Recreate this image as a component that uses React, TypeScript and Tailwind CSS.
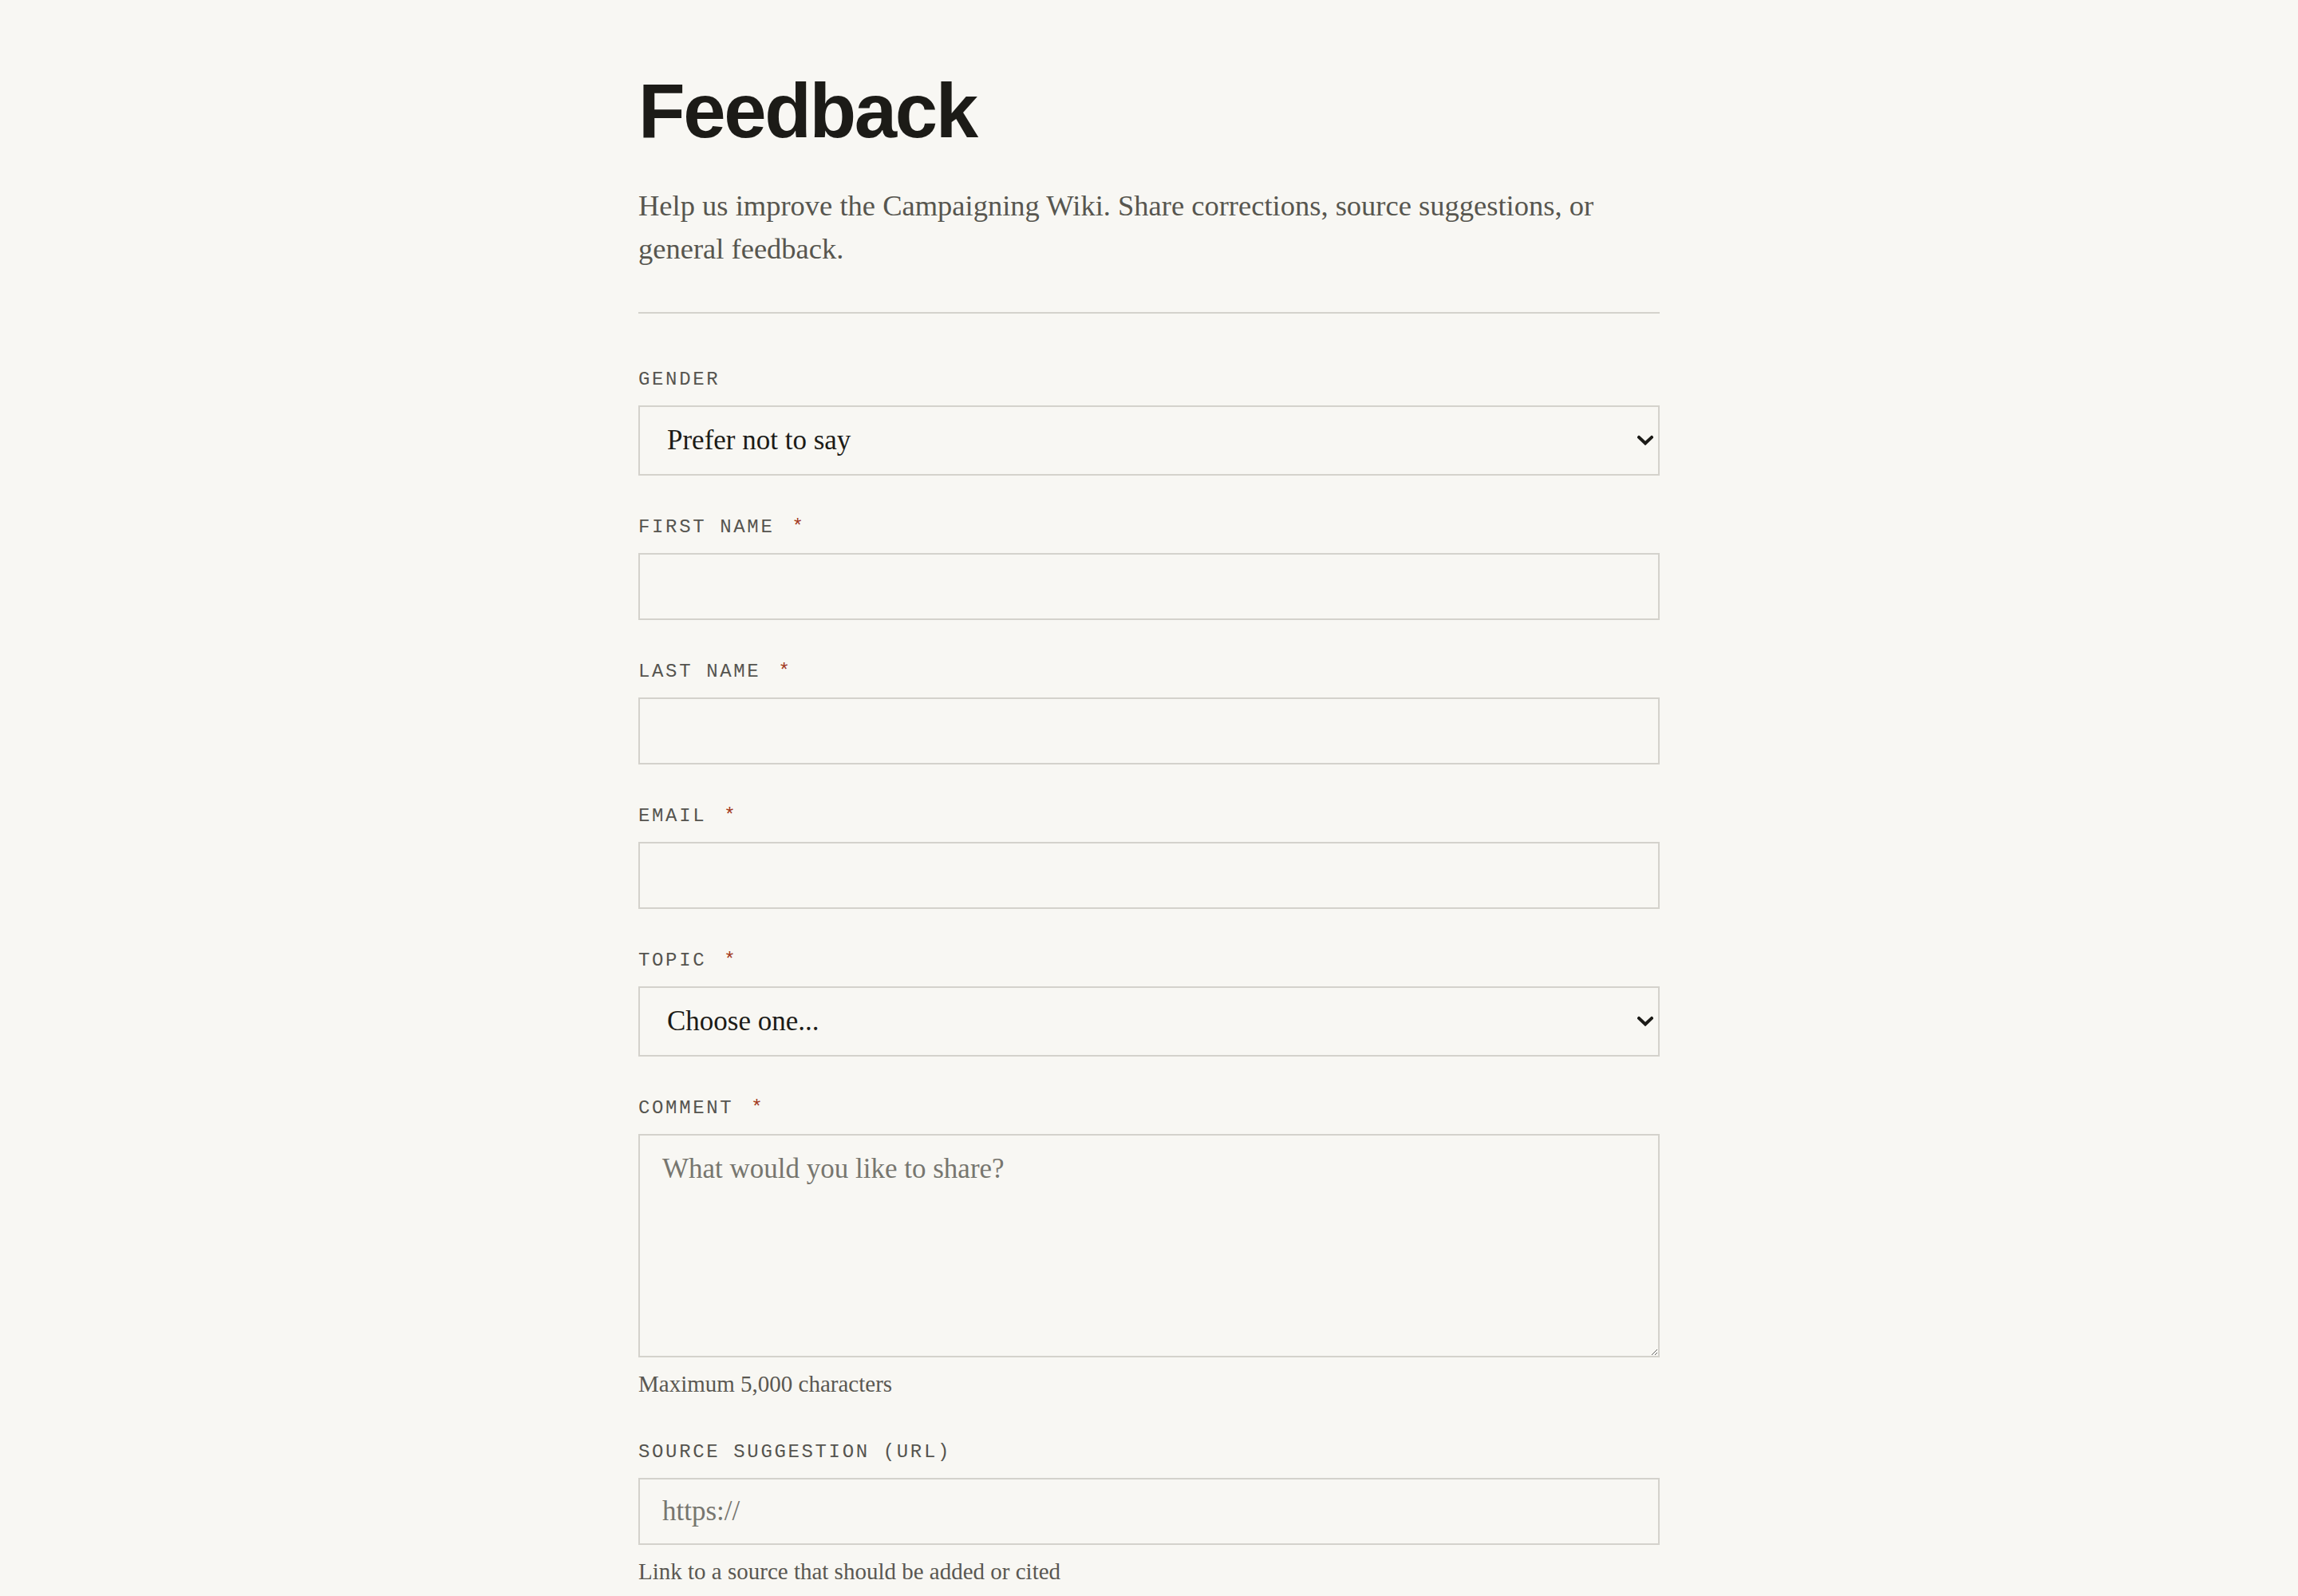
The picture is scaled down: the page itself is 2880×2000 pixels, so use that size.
import React, { useState } from 'react';

const labelCls =
    "block text-[24px] leading-[36px] tracking-[0.11em] uppercase text-[#55544f] mb-[14px] [font-family:'Liberation_Mono',monospace]";
const inputCls =
    "block w-full h-[84px] border-2 border-[#d4d2cc] bg-[#f8f7f3] pl-[28px] pr-[28px] text-[35px] text-[#1c1b17] placeholder:text-[#77766f] outline-none [font-family:'Liberation_Serif',serif]";
const selectCls =
    "block w-full h-[88px] appearance-none border-2 border-[#d4d2cc] bg-[#f8f7f3] pl-[34px] pr-[60px] text-[35px] text-[#1c1b17] outline-none [font-family:'Liberation_Serif',serif]";
const helpCls = "mt-[12px] text-[29px] leading-[42px] text-[#5a5852] [font-family:'Liberation_Serif',serif]";

const Required = () => <span className="ml-[22px] text-[#a33a22]">*</span>;

const Chevron = () => (
    <svg
        className="pointer-events-none absolute right-[8px] top-1/2 -translate-y-1/2"
        width="20"
        height="13"
        viewBox="0 0 20 13"
        fill="none"
    >
        <path d="M2 2.5 L10 10 L18 2.5" stroke="#1c1b17" strokeWidth="4" strokeLinecap="square" strokeLinejoin="miter" />
    </svg>
);

export default function App() {
    const [gender, setGender] = useState('none');
    const [topic, setTopic] = useState('');

    return (
        <div className="min-h-screen bg-[#f8f7f3]">
            <div className="mx-auto w-[1280px] pt-[91px] pb-[160px]">
                {/* Header */}
                <h1 className="text-[96px] leading-none font-bold tracking-tight text-[#1c1b17] [font-family:'Liberation_Sans',Arial,sans-serif]">
                    Feedback
                </h1>
                <p className="mt-[44px] text-[36.5px] leading-[54px] text-[#57564f] [font-family:'Liberation_Serif',serif]">
                    Help us improve the Campaigning Wiki. Share corrections, source suggestions, or general feedback.
                </p>
                <hr className="mt-[52px] border-0 border-t-2 border-[#d4d2cc]" />

                {/* Form */}
                <form className="mt-[65px] flex flex-col gap-[47px]" onSubmit={(e) => e.preventDefault()}>
                    <div>
                        <label className={labelCls}>Gender</label>
                        <div className="relative">
                            <select className={selectCls} value={gender} onChange={(e) => setGender(e.target.value)}>
                                <option value="none">Prefer not to say</option>
                                <option value="female">Female</option>
                                <option value="male">Male</option>
                                <option value="other">Other</option>
                            </select>
                            <Chevron />
                        </div>
                    </div>

                    <div>
                        <label className={labelCls}>
                            First name
                            <Required />
                        </label>
                        <input type="text" className={inputCls} />
                    </div>

                    <div>
                        <label className={labelCls}>
                            Last name
                            <Required />
                        </label>
                        <input type="text" className={inputCls} />
                    </div>

                    <div>
                        <label className={labelCls}>
                            Email
                            <Required />
                        </label>
                        <input type="email" className={inputCls} />
                    </div>

                    <div>
                        <label className={labelCls}>
                            Topic
                            <Required />
                        </label>
                        <div className="relative">
                            <select className={selectCls} value={topic} onChange={(e) => setTopic(e.target.value)}>
                                <option value="">Choose one...</option>
                                <option value="correction">Correction</option>
                                <option value="source">Source suggestion</option>
                                <option value="general">General feedback</option>
                            </select>
                            <Chevron />
                        </div>
                    </div>

                    <div>
                        <label className={labelCls}>
                            Comment
                            <Required />
                        </label>
                        <textarea
                            className="block w-full h-[280px] border-2 border-[#d4d2cc] bg-[#f8f7f3] px-[28px] pt-[16px] text-[35px] leading-[52px] text-[#1c1b17] placeholder:text-[#77766f] outline-none [font-family:'Liberation_Serif',serif]"
                            placeholder="What would you like to share?"
                            maxLength={5000}
                        />
                        <p className={helpCls}>Maximum 5,000 characters</p>
                    </div>

                    <div>
                        <label className={labelCls}>Source suggestion (URL)</label>
                        <input type="url" className={inputCls} placeholder="https://" />
                        <p className={helpCls}>Link to a source that should be added or cited</p>
                    </div>
                </form>
            </div>
        </div>
    );
}
